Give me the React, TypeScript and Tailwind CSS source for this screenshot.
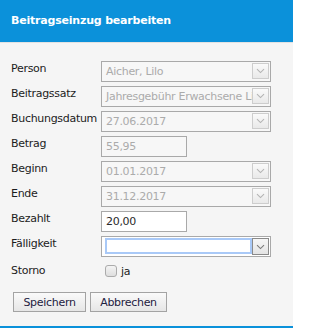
import React from 'react';

const font = "font-['DejaVu_Sans',Verdana,sans-serif]";

function Chevron({ color = '#a0a0a0' }: { color?: string }) {
  return (
    <svg width="9" height="6" viewBox="0 0 9 6" fill="none">
      <path d="M1 1.2L4.5 4.6L8 1.2" stroke={color} strokeWidth="1.1" />
    </svg>
  );
}

function DisabledSelect({ value }: { value: string }) {
  return (
    <div className="w-[170px] h-[21px] border border-[#a9a9a9] bg-[#f7f7f7] flex items-center">
      <div className="flex-1 overflow-hidden whitespace-nowrap pl-[4px] text-[11px] tracking-[-0.3px] text-[#ababab] leading-[19px]">
        {value}
      </div>
      <div className="w-[17px] h-[16px] mr-[1px] mb-[1px] border border-[#cdcdcd] bg-gradient-to-b from-[#fafafa] to-[#e9e9e9] flex items-center justify-center shrink-0">
        <Chevron color="#b4b4b4" />
      </div>
    </div>
  );
}

function TextBox({ value, disabled }: { value: string; disabled?: boolean }) {
  return (
    <div
      className={`w-[86px] h-[21px] border border-[#a9a9a9] pl-[4px] text-[11px] tracking-[-0.3px] leading-[19px] ${
        disabled ? 'bg-[#f7f7f7] text-[#ababab]' : 'bg-white text-[#2a2a2a]'
      }`}
    >
      {value}
    </div>
  );
}

function Row({ label, children }: { label: string; children: React.ReactNode }) {
  return (
    <div className="flex items-start h-[21px]">
      <div className="w-[90px] pl-[11px] box-content text-[11px] leading-4 tracking-[-0.3px] text-[#1c1c1c] whitespace-nowrap">
        {label}
      </div>
      {children}
    </div>
  );
}

export default function App() {
  return (
    <div className={`w-[293px] h-[331px] overflow-hidden bg-[#f5f5f5] ${font}`}>
      {/* Kopfzeile */}
      <div className="h-[42px] bg-[#0b91da] flex items-center pl-[11px]">
        <h1 className="text-white font-bold text-[11px] tracking-[-0.2px]">Beitragseinzug bearbeiten</h1>
      </div>
      <div className="h-px bg-[#e2e2e2]" />

      {/* Formular */}
      <div className="pt-[18px] flex flex-col gap-[4px]">
        <Row label="Person">
          <DisabledSelect value="Aicher, Lilo" />
        </Row>
        <Row label="Beitragssatz">
          <DisabledSelect value="Jahresgebühr Erwachsene Lilo" />
        </Row>
        <Row label="Buchungsdatum">
          <DisabledSelect value="27.06.2017" />
        </Row>
        <Row label="Betrag">
          <TextBox value="55,95" disabled />
        </Row>
        <Row label="Beginn">
          <DisabledSelect value="01.01.2017" />
        </Row>
        <Row label="Ende">
          <DisabledSelect value="31.12.2017" />
        </Row>
        <Row label="Bezahlt">
          <TextBox value="20,00" />
        </Row>
        <Row label="Fälligkeit">
          <div className="w-[170px] h-[21px] border border-[#a9a9a9] bg-white flex items-start pt-px pl-[3px]">
            <div className="w-[147px] h-[16px] border-2 border-[#a9c9f7] bg-white" />
            <div className="w-[17px] h-[17px] border border-[#8a8a8a] bg-gradient-to-b from-[#f6f6f6] to-[#e4e4e4] flex items-center justify-center">
              <Chevron color="#7a7a7a" />
            </div>
          </div>
        </Row>
      </div>

      <div className="flex items-start mt-[6px] h-[16px]">
        <div className="w-[90px] pl-[11px] box-content text-[11px] leading-4 tracking-[-0.3px] text-[#1c1c1c]">Storno</div>
        <div className="flex items-end pl-[4px] pt-[2px] gap-[4px]">
          <div className="w-[12px] h-[12px] rounded-[3px] border border-[#ababab] bg-gradient-to-b from-[#f4f4f4] to-[#dedede]" />
          <span className="text-[11px] leading-[12px] tracking-[-0.3px] text-[#1c1c1c] translate-y-[1px]">ja</span>
        </div>
      </div>

      {/* Schaltflächen */}
      <div className="flex gap-[4px] pl-[13px] mt-[13px]">
        <button className="w-[73px] h-[20px] border border-[#a3a3a3] bg-gradient-to-b from-[#fafafa] to-[#e6e6e6] text-[11px] tracking-[-0.3px] text-[#1d2140] leading-none">
          Speichern
        </button>
        <button className="w-[77px] h-[20px] border border-[#a3a3a3] bg-gradient-to-b from-[#fafafa] to-[#e6e6e6] text-[11px] tracking-[-0.3px] text-[#1d2140] leading-none">
          Abbrechen
        </button>
      </div>

      <div className="mt-[14px] h-[2px] bg-[#0b91da]" />
      <div className="h-[10px] bg-white" />
    </div>
  );
}
